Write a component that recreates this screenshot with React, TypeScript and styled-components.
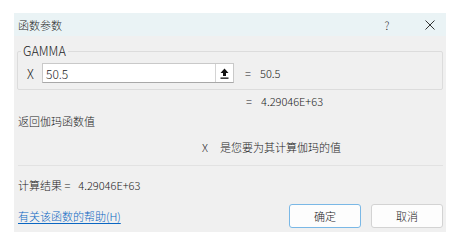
import styled, { createGlobalStyle } from "styled-components"

const GlobalStyle = createGlobalStyle`
	html, body {
		margin: 0;
		padding: 0;
		background: #ffffff;
	}
	body {
		font-family: "Noto Sans CJK SC", "Noto Sans", sans-serif;
		font-size: 11px;
		font-weight: 300;
		color: #1b1b1b;
	}
`

const Dialog = styled.div`
	margin: 13px 0 0 14px;
	width: 432px;
	height: 219px;
	background: #f0f0f0;
	display: flex;
	flex-direction: column;
`

const TitleBar = styled.div`
	height: 23px;
	display: flex;
	align-items: center;
	padding-left: 4px;
	background: #eaf3f5;
`

const TitleText = styled.span`
	flex: 1;
`

const TitleButton = styled.span<{ $width: number; $gap?: number }>`
	width: ${(p) => p.$width}px;
	margin-right: ${(p) => p.$gap ?? 0}px;
	display: flex;
	justify-content: center;
	align-items: center;
	color: #222;
`

const Content = styled.div`
	flex: 1;
	display: flex;
	flex-direction: column;
	padding: 0 3px 4px 3px;
`

const Group = styled.fieldset`
	margin: 8px 0 0 0;
	padding: 0 8px 6px 9px;
	border: 1px solid #dcdcdc;
	border-radius: 2px;
	min-width: 0;
`

const GroupTitle = styled.legend`
	margin-left: -6px;
	padding: 0 2px;
	line-height: 14px;
	font-size: 12.5px;
	color: #1b1b1b;
`

const ArgRow = styled.div`
	margin-top: 5px;
	height: 20px;
	display: flex;
	align-items: center;
`

const ArgName = styled.span`
	width: 15px;
	font-size: 12.5px;
`

const InputBox = styled.div`
	width: 192px;
	height: 20px;
	box-sizing: border-box;
	display: flex;
	background: #ffffff;
	border: 1px solid #c9c9c9;
	border-bottom-color: #a8a8a8;
`

const Field = styled.input`
	flex: 1;
	min-width: 0;
	border: none;
	outline: none;
	padding: 0 3px;
	font: inherit;
	font-size: 12px;
	color: #1b1b1b;
	background: transparent;
`

const CollapseButton = styled.span`
	width: 17px;
	display: flex;
	align-items: center;
	justify-content: center;
	border-left: 1px solid #d4d4d4;
`

const Equals = styled.span<{ $indent: number }>`
	display: inline-block;
	margin-left: ${(p) => p.$indent}px;
	width: 15px;
`

const ResultLine = styled.div`
	margin-top: 4px;
	height: 14px;
	line-height: 14px;
	padding-left: 229px;
`

const Text = styled.div<{ $top: number; $indent?: number }>`
	margin-top: ${(p) => p.$top}px;
	padding-left: ${(p) => p.$indent ?? 1}px;
	height: 14px;
	line-height: 14px;
	white-space: nowrap;
`

const ArgLetter = styled.span`
	display: inline-block;
	width: 18px;
`

const Separator = styled.div`
	margin: 11px 0 0 1px;
	height: 1px;
	background: #e2e2e2;
`

const ResultValue = styled.span`
	margin-left: 8px;
`

const Footer = styled.div`
	margin-top: 12px;
	display: flex;
	align-items: center;
	gap: 10px;
	padding-left: 1px;
`

const HelpLink = styled.a`
	flex: 1;
	color: #0a66c2;
	text-decoration: underline;
	text-underline-offset: 2px;
	cursor: pointer;
`

const Button = styled.button<{ $primary?: boolean }>`
	width: 72px;
	height: 24px;
	box-sizing: border-box;
	border-radius: 3px;
	border: 1px solid ${(p) => (p.$primary ? "#7ab8e6" : "#d3d3d3")};
	background: #fdfdfd;
	font: inherit;
	color: #1b1b1b;
	padding: 0;
`

function App() {
	return (
		<>
			<GlobalStyle />
			<Dialog>
				<TitleBar>
					<TitleText>函数参数</TitleText>
					<TitleButton $width={30} $gap={12}>?</TitleButton>
					<TitleButton $width={32}>
						<svg width="10" height="10" viewBox="0 0 10 10">
							<path d="M0.5 0.5 L9.5 9.5 M9.5 0.5 L0.5 9.5" stroke="#333" strokeWidth="1" />
						</svg>
					</TitleButton>
				</TitleBar>
				<Content>
					<Group>
						<GroupTitle>GAMMA</GroupTitle>
						<ArgRow>
							<ArgName>X</ArgName>
							<InputBox>
								<Field defaultValue="50.5" />
								<CollapseButton>
									<svg width="9" height="11" viewBox="0 0 9 11">
										<path d="M4.5 0.5 L8.5 5 L6 5 L6 8 L3 8 L3 5 L0.5 5 Z" fill="#111" />
										<rect x="0.5" y="9.5" width="8" height="1.3" fill="#111" />
									</svg>
								</CollapseButton>
							</InputBox>
							<Equals $indent={11}>=</Equals>
							<span>50.5</span>
						</ArgRow>
					</Group>
					<ResultLine>
						<Equals $indent={0}>=</Equals>
						4.29046E+63
					</ResultLine>
					<Text $top={6}>返回伽玛函数值</Text>
					<Text $top={12} $indent={185}>
						<ArgLetter>X</ArgLetter>是您要为其计算伽玛的值
					</Text>
					<Separator />
					<Text $top={12}>
						计算结果 =<ResultValue>4.29046E+63</ResultValue>
					</Text>
					<Footer>
						<HelpLink>有关该函数的帮助(H)</HelpLink>
						<Button $primary>确定</Button>
						<Button>取消</Button>
					</Footer>
				</Content>
			</Dialog>
		</>
	)
}

export default App
